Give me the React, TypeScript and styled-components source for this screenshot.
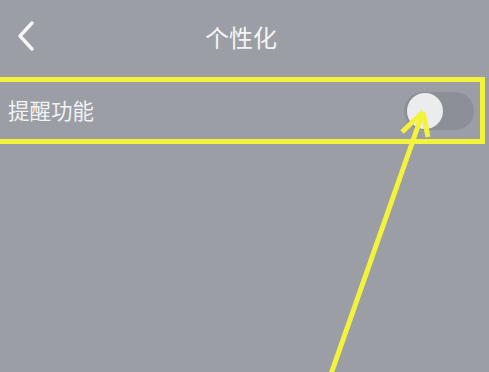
import styled, { createGlobalStyle } from "styled-components";

const GlobalStyle = createGlobalStyle`
	html, body {
		margin: 0;
		padding: 0;
		background: #9b9fa5;
		overflow: hidden;
	}
	body {
		font-family: "Noto Sans CJK SC", "Noto Sans", sans-serif;
	}
`;

const Screen = styled.div`
	position: relative;
	width: 489px;
	height: 372px;
	background: #9b9fa5;
	overflow: hidden;
`;

const Header = styled.header`
	position: relative;
	height: 77px;
	display: flex;
	align-items: center;
	justify-content: center;
`;

const BackButton = styled.button`
	position: absolute;
	left: 12px;
	top: 19px;
	width: 28px;
	height: 34px;
	padding: 0;
	border: 0;
	background: none;
	display: flex;
	align-items: center;
	justify-content: center;
`;

const Title = styled.h1`
	margin: 0 0 4px -7px;
	font-size: 24px;
	font-weight: 400;
	color: #f4f4f6;
`;

const Row = styled.div`
	box-sizing: border-box;
	width: 491px;
	height: 67px;
	margin-left: -6px;
	border: 5px solid #f3f33c;
	display: flex;
	align-items: center;
	justify-content: space-between;
	padding: 0 6px 0 9px;
`;

const Label = styled.span`
	font-size: 21.5px;
	color: #f2f2f4;
	margin-bottom: 2px;
`;

const Track = styled.div<{ $on: boolean }>`
	position: relative;
	width: 70px;
	height: 38px;
	border-radius: 19px;
	background: ${({ $on }) => ($on ? "#4cd964" : "#8c9096")};
	margin-top: 1px;
`;

const Knob = styled.div<{ $on: boolean }>`
	position: absolute;
	top: 1px;
	left: ${({ $on }) => ($on ? "33px" : "3px")};
	width: 36px;
	height: 36px;
	border-radius: 50%;
	background: #ececef;
`;

const Annotation = styled.svg`
	position: absolute;
	left: 0;
	top: 0;
	pointer-events: none;
`;

const Switch = ({ on }: { on: boolean }) => (
	<Track $on={on}>
		<Knob $on={on} />
	</Track>
);

export default function App() {
	return (
		<>
			<GlobalStyle />
			<Screen>
				<Header>
					<BackButton aria-label="back">
						<svg width="24" height="32" viewBox="0 0 24 32">
							<path
								d="M18 3 L6 16 L18 29"
								fill="none"
								stroke="#f6f6f8"
								strokeWidth="3.4"
								strokeLinecap="round"
								strokeLinejoin="round"
							/>
						</svg>
					</BackButton>
					<Title>个性化</Title>
				</Header>
				<Row>
					<Label>提醒功能</Label>
					<Switch on={false} />
				</Row>
				<Annotation width="489" height="372" viewBox="0 0 489 372">
					<g stroke="#f3f33c" strokeWidth="5" strokeLinecap="butt" fill="none">
						<path d="M423 112 L331 374" />
						<path d="M423 112 L402 132" />
						<path d="M423 112 L428 137" />
					</g>
				</Annotation>
			</Screen>
		</>
	);
}
